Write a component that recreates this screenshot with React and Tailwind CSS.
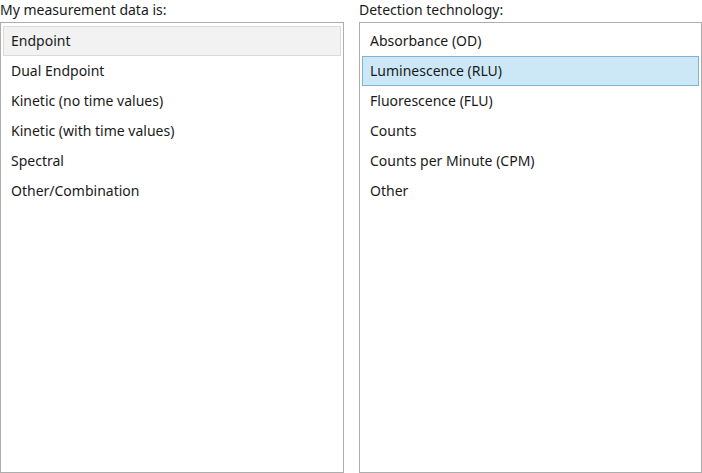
import { useState } from "react";

const dataTypes = [
    "Endpoint",
    "Dual Endpoint",
    "Kinetic (no time values)",
    "Kinetic (with time values)",
    "Spectral",
    "Other/Combination",
];

const technologies = [
    "Absorbance (OD)",
    "Luminescence (RLU)",
    "Fluorescence (FLU)",
    "Counts",
    "Counts per Minute (CPM)",
    "Other",
];

function ListBox({ label, items, selected, focused, onSelect }) {
    return (
        <div className="flex flex-col h-full">
            <div className="h-[22px] text-[14px] leading-[20px] text-[#1a1a1a]">{label}</div>
            <div className="flex-1 border border-[#adadad] bg-white px-[2px] py-[3px]">
                {items.map((item) => {
                    const isSel = item === selected;
                    let cls = "border-transparent";
                    if (isSel) {
                        cls = focused
                            ? "bg-[#cce8f7] border-[#7db3d4]"
                            : "bg-[#f2f2f2] border-[#dadada]";
                    }
                    return (
                        <div
                            key={item}
                            onClick={() => onSelect(item)}
                            className={`h-[30px] flex items-center pl-[7px] pb-[2px] border text-[14px] text-[#1a1a1a] cursor-default ${cls}`}
                        >
                            {item}
                        </div>
                    );
                })}
            </div>
        </div>
    );
}

export default function App() {
    const [dataType, setDataType] = useState("Endpoint");
    const [tech, setTech] = useState("Luminescence (RLU)");

    return (
        <div
            className="w-[702px] h-[473px] bg-white grid grid-cols-[344px_343px] gap-x-[15px]"
            style={{ fontFamily: '"Noto Sans", "Open Sans", sans-serif' }}
        >
            <ListBox
                label="My measurement data is:"
                items={dataTypes}
                selected={dataType}
                focused={false}
                onSelect={setDataType}
            />
            <ListBox
                label="Detection technology:"
                items={technologies}
                selected={tech}
                focused={true}
                onSelect={setTech}
            />
        </div>
    );
}
